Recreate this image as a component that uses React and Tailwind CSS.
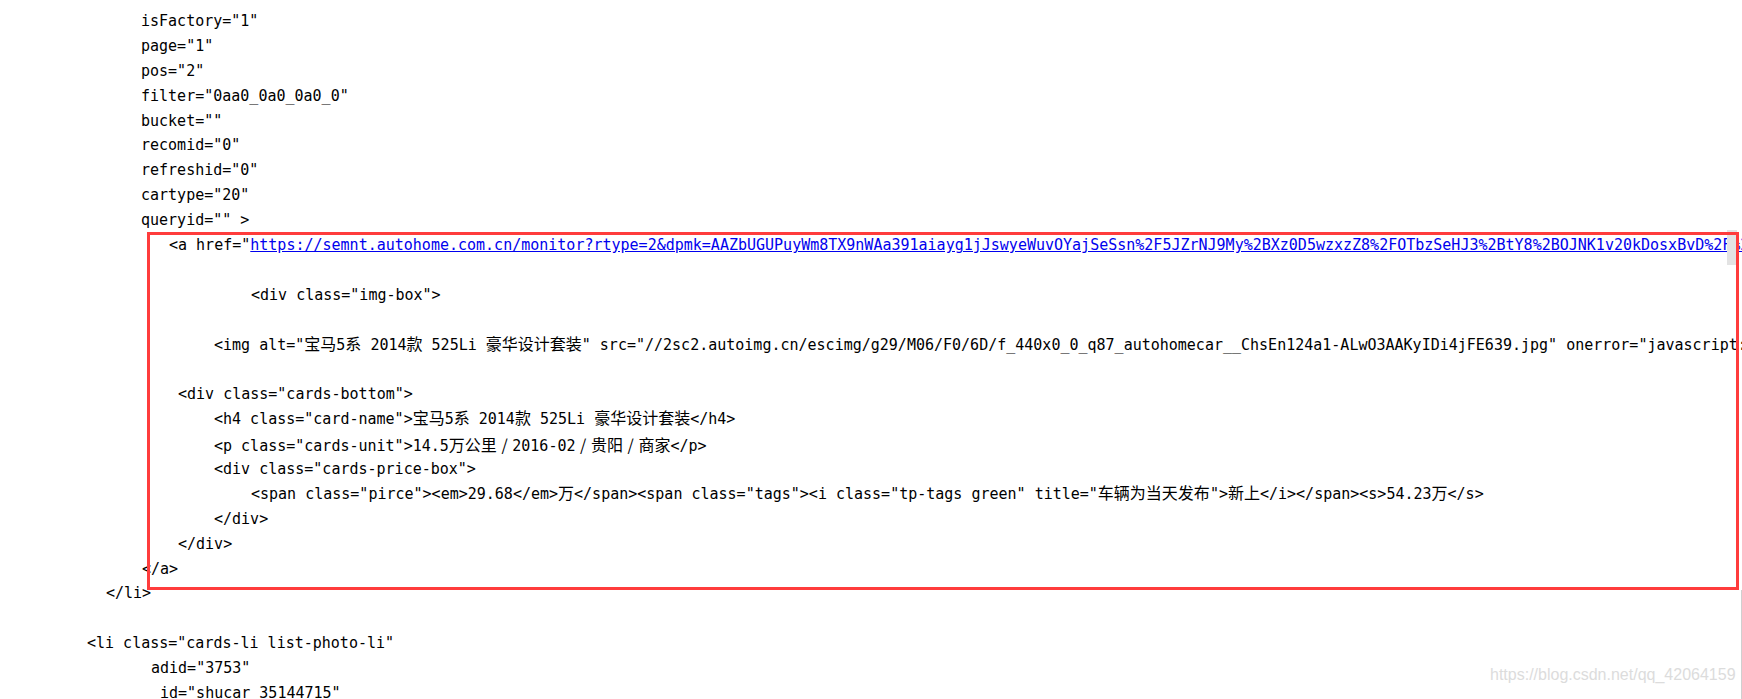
import React from "react";

const link =
  "https://semnt.autohome.com.cn/monitor?rtype=2&dpmk=AAZbUGUPuyWm8TX9nWAa391aiayg1jJswyeWuvOYajSeSsn%2F5JZrNJ9My%2BXz0D5wzxzZ8%2FOTbzSeHJ3%2BtY8%2BOJNK1v20kDosxBvD%2F%2BSsRw%3D%3D";

// [indent px, text] ; null text = blank line
const lines = [
  [141, 'isFactory="1"'],
  [141, 'page="1"'],
  [141, 'pos="2"'],
  [141, 'filter="0aa0_0a0_0a0_0"'],
  [141, 'bucket=""'],
  [141, 'recomid="0"'],
  [141, 'refreshid="0"'],
  [141, 'cartype="20"'],
  [141, 'queryid="" >'],
  [169, "LINK"],
  [0, null],
  [251, '<div class="img-box">'],
  [0, null],
  [214, '<img alt="宝马5系 2014款 525Li 豪华设计套装" src="//2sc2.autoimg.cn/escimg/g29/M06/F0/6D/f_440x0_0_q87_autohomecar__ChsEn124a1-ALwO3AAKyIDi4jFE639.jpg" onerror="javascript:this.src=\'//x.autoimg.cn/2sc/2018/pc/m/images/default-car.png\'">'],
  [0, null],
  [178, '<div class="cards-bottom">'],
  [214, '<h4 class="card-name">宝马5系 2014款 525Li 豪华设计套装</h4>'],
  [214, "UNIT"],
  [214, '<div class="cards-price-box">'],
  [251, '<span class="pirce"><em>29.68</em>万</span><span class="tags"><i class="tp-tags green" title="车辆为当天发布">新上</i></span><s>54.23万</s>'],
  [214, "</div>"],
  [178, "</div>"],
  [142, "</a>"],
  [106, "</li>"],
  [0, null],
  [87, '<li class="cards-li list-photo-li"'],
  [151, 'adid="3753"'],
  [160, 'id="shucar_35144715"'],
];

const Code = ({ text }) =>
  text.split(/([\u4e00-\u9fff]+)/).map((part, i) =>
    /[\u4e00-\u9fff]/.test(part) ? (
      <span key={i} className="text-[16px]">
        {part}
      </span>
    ) : (
      <React.Fragment key={i}>{part}</React.Fragment>
    )
  );

const Sep = () => (
  <span className="px-[1px] font-['Noto_Sans_CJK_SC',sans-serif] text-[16px]"> / </span>
);

const Line = ({ indent, text }) => {
  let body = null;
  if (text === "LINK") {
    body = (
      <>
        {'<a href="'}
        <span className="text-[#0000ee] underline">{link}</span>
        {'" target="_blank">'}
      </>
    );
  } else if (text === "UNIT") {
    body = (
      <>
        {'<p class="cards-unit">14.5'}
        <Code text="万公里" />
        <Sep />
        {"2016-02"}
        <Sep />
        <Code text="贵阳" />
        <Sep />
        <Code text="商家" />
        {"</p>"}
      </>
    );
  } else if (text) {
    body = <Code text={text} />;
  }
  return (
    <div
      className="h-[24.9px] leading-[24.9px] whitespace-pre"
      style={{ paddingLeft: indent }}
    >
      {body}
    </div>
  );
};

export default function App() {
  return (
    <div className="relative w-[1742px] h-[699px] overflow-hidden bg-white text-black font-['DejaVu_Sans_Mono','Noto_Sans_CJK_SC',monospace] text-[15px]">
      <div className="flex flex-col pt-[9px]">
        {lines.map(([indent, text], i) => (
          <Line key={i} indent={indent} text={text} />
        ))}
      </div>

      {/* scrollbar thumb peeking at the right */}
      <div className="absolute left-[1727px] top-[230px] w-[10px] h-[35px] bg-[#e3e3e3]" />

      {/* red highlight box */}
      <div className="absolute left-[147px] top-[232px] w-[1592px] h-[358px] border-[3px] border-[#ff3c3c]" />

      <div className="absolute left-[1741px] top-[590px] w-px h-[109px] bg-[#cfcfcf]" />

      {/* watermark */}
      <div className="absolute left-[1490px] top-[665px] font-['Liberation_Sans',Arial,sans-serif] text-[16px] leading-[20px] text-[#dcdcdc] whitespace-nowrap">
        https://blog.csdn.net/qq_42064159
      </div>
    </div>
  );
}
